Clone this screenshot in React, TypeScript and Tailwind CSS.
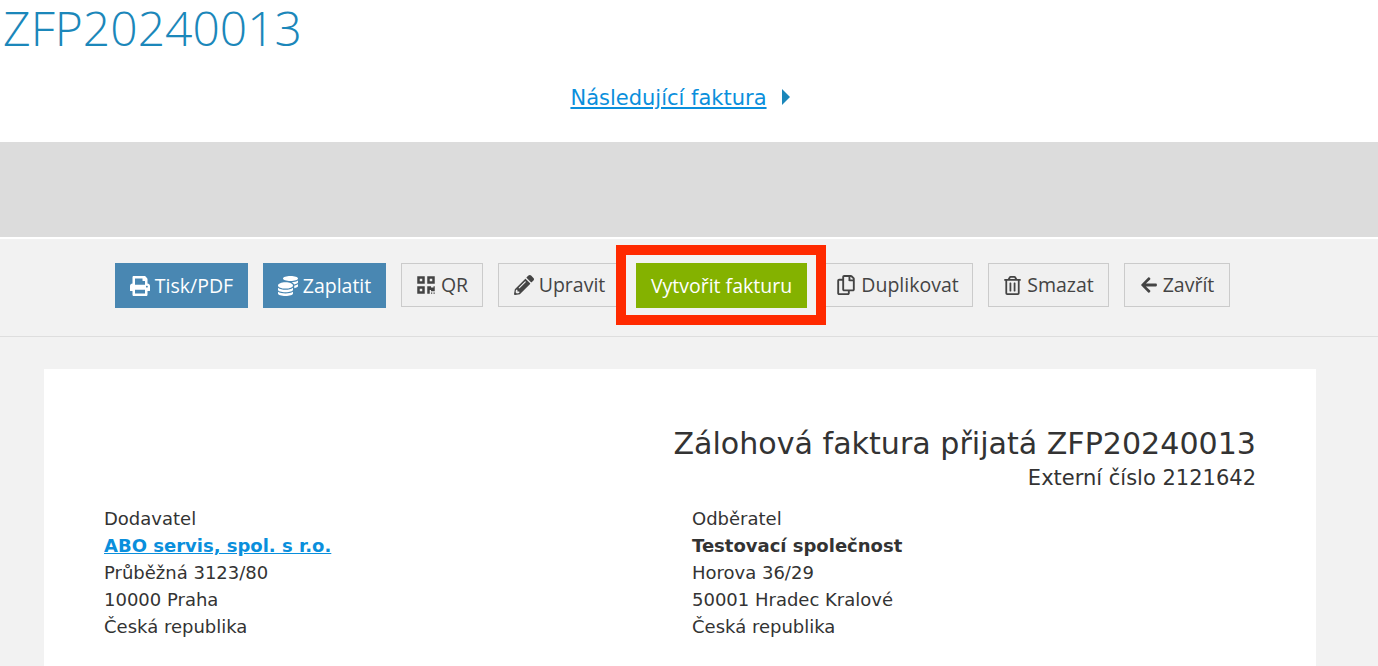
import { FaArrowLeft, FaCoins, FaPencilAlt, FaPrint, FaQrcode, FaRegCopy, FaRegTrashAlt } from "react-icons/fa";
import type { ReactNode } from "react";

function ActionButton({
  icon,
  label,
  width,
  variant = "plain",
}: {
  icon?: ReactNode;
  label: string;
  width: string;
  variant?: "plain" | "blue" | "green";
}) {
  const look =
    variant === "blue"
      ? "h-[45px] bg-[#4987b2] text-white border-[#4987b2]"
      : variant === "green"
        ? "h-[45px] bg-[#84b200] text-white border-[#84b200]"
        : "h-[44px] bg-[#f0f0f0] text-[#444] border-[#cbcbcb]";
  return (
    <button
      type="button"
      className={`flex items-center justify-center gap-[5px] border text-[19.5px] leading-none ${width} ${look}`}
    >
      {icon}
      {label}
    </button>
  );
}

function AddressBlock({ title, name, link, lines }: { title: string; name: string; link?: boolean; lines: string[] }) {
  return (
    <div className="text-[18px] leading-[27px] text-[#333]">
      <div>{title}</div>
      <div className={link ? "font-bold text-[#0a8fdc] underline" : "font-bold"}>{name}</div>
      {lines.map((l) => (
        <div key={l}>{l}</div>
      ))}
    </div>
  );
}

export default function App() {
  return (
    <div className="h-[666px] overflow-hidden bg-white font-['DejaVu_Sans',sans-serif]">
      {/* page content is 1360 wide, the last 18px is where the scrollbar sat */}
      <h1 className="h-[60px] pl-[3px] font-['Open_Sans',sans-serif] text-[48px] leading-[56px] font-light text-[#1b87ba]">
        ZFP20240013
      </h1>
      <div className="flex h-[82px] w-[1360px] items-start justify-center pt-[24px]">
        <a href="#" className="text-[21px] leading-[28px] text-[#0a8fdc] underline">
          Následující faktura
        </a>
        <span className="mt-[5px] ml-[15px] h-0 w-0 border-y-[8px] border-l-[8px] border-y-transparent border-l-[#1b87ba]" />
      </div>
      <div className="h-[95px] bg-[#dcdcdc]" />
      <div className="h-[429px] bg-[#f2f2f2]">
        <div className="h-[2px] bg-white" />
        <div className="h-[98px] border-b border-[#dedede] pt-[24px] font-['Open_Sans',sans-serif]">
          <div className="flex w-[1360px] items-start justify-center gap-[15px] pr-[15px]">
            <ActionButton variant="blue" width="w-[133px]" icon={<FaPrint className="text-[20px]" />} label="Tisk/PDF" />
            <ActionButton variant="blue" width="w-[123px]" icon={<FaCoins className="text-[20px]" />} label="Zaplatit" />
            <ActionButton width="w-[82px]" icon={<FaQrcode className="text-[20px]" />} label="QR" />
            <ActionButton width="w-[123px]" icon={<FaPencilAlt className="text-[20px]" />} label="Upravit" />
            <div className="relative">
              <ActionButton variant="green" width="w-[171px]" label="Vytvořit fakturu" />
              <div className="absolute top-[-18px] left-[-20px] h-[80px] w-[210px] border-[10px] border-[#ff2a00]" />
            </div>
            <ActionButton width="w-[151px]" icon={<FaRegCopy className="text-[20px]" />} label="Duplikovat" />
            <ActionButton width="w-[121px]" icon={<FaRegTrashAlt className="text-[19px]" />} label="Smazat" />
            <ActionButton width="w-[106px]" icon={<FaArrowLeft className="text-[18px]" />} label="Zavřít" />
          </div>
        </div>
        <div className="mt-[32px] ml-[44px] h-[400px] w-[1272px] bg-white px-[60px] pt-[56px]">
          <div className="text-right text-[#333]">
            <div className="text-[30.1px] leading-[38px]">Zálohová faktura přijatá ZFP20240013</div>
            <div className="text-[21px] leading-[30px]">Externí číslo 2121642</div>
          </div>
          <div className="mt-[12px] grid grid-cols-[588px_1fr]">
            <AddressBlock
              title="Dodavatel"
              name="ABO servis, spol. s r.o."
              link
              lines={["Průběžná 3123/80", "10000 Praha", "Česká republika"]}
            />
            <AddressBlock
              title="Odběratel"
              name="Testovací společnost"
              lines={["Horova 36/29", "50001 Hradec Kralové", "Česká republika"]}
            />
          </div>
        </div>
      </div>
    </div>
  );
}
